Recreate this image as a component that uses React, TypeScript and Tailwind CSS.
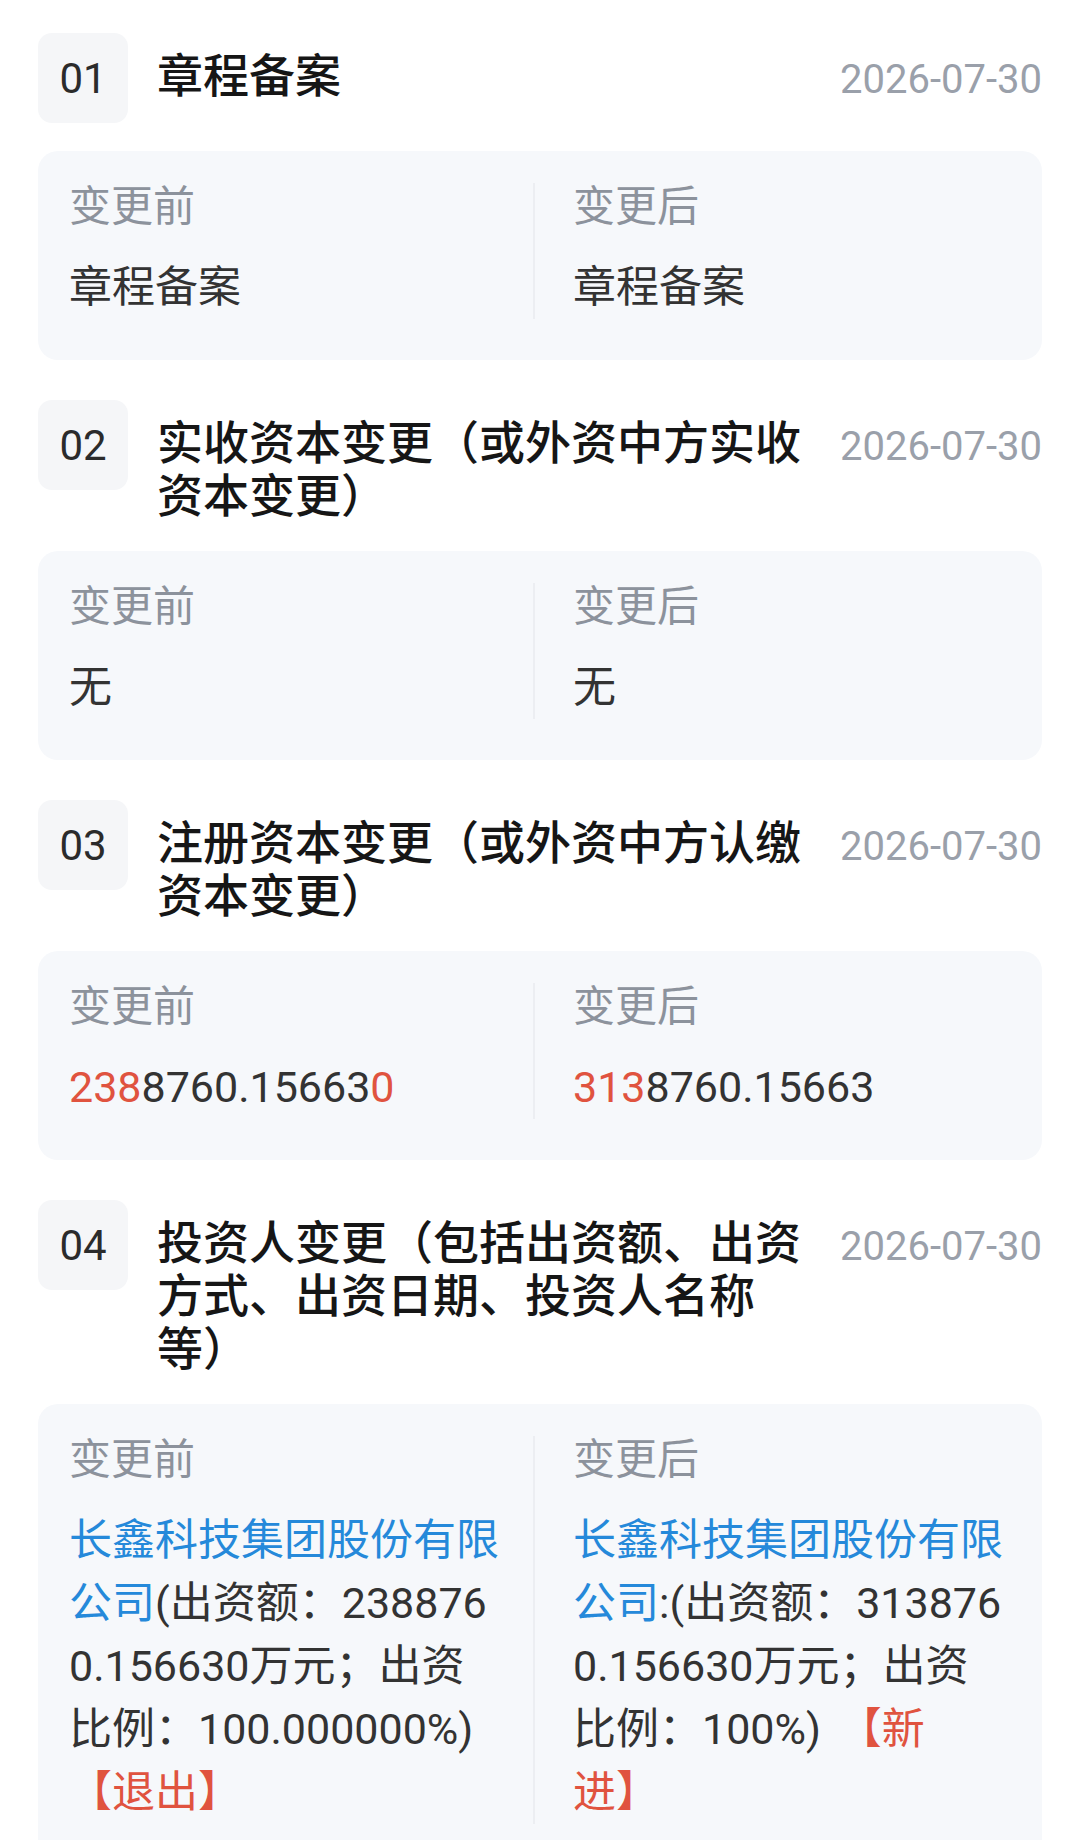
import type { ReactNode } from "react";

type ChangeItem = {
  no: string;
  title: string;
  date: string;
  before: ReactNode;
  after: ReactNode;
};

const red = "text-[#e0533f]";
const blue = "text-[#2589da]";

const items: ChangeItem[] = [
  {
    no: "01",
    title: "章程备案",
    date: "2026-07-30",
    before: "章程备案",
    after: "章程备案",
  },
  {
    no: "02",
    title: "实收资本变更（或外资中方实收资本变更）",
    date: "2026-07-30",
    before: "无",
    after: "无",
  },
  {
    no: "03",
    title: "注册资本变更（或外资中方认缴资本变更）",
    date: "2026-07-30",
    before: (
      <>
        <span className={red}>238</span>8760.15663<span className={red}>0</span>
      </>
    ),
    after: (
      <>
        <span className={red}>313</span>8760.15663
      </>
    ),
  },
  {
    no: "04",
    title: "投资人变更（包括出资额、出资方式、出资日期、投资人名称等）",
    date: "2026-07-30",
    before: (
      <>
        <span className={blue}>长鑫科技集团股份有限公司</span>(出资额：2388760.156630万元；出资比例：100.000000%){" "}
        <span className={red}>【退出】</span>
      </>
    ),
    after: (
      <>
        <span className={blue}>长鑫科技集团股份有限公司</span>:(出资额：3138760.156630万元；出资比例：100%){"\u00a0"}
        <span className={red}>
          【新
          <wbr />
          进】
        </span>
      </>
    ),
  },
];

function ChangeBlock({ item }: { item: ChangeItem }) {
  return (
    <div className="mb-[40px]">
      <div className="flex items-start">
        <div className="flex h-[90px] w-[90px] shrink-0 items-center justify-center rounded-[14px] bg-[#f5f6f8] text-[42px] text-[#2b2b2b]">
          {item.no}
        </div>
        <div className="ml-[29px] mt-[17px] min-w-0 flex-1 text-[46px] font-medium leading-[53px] text-[#161616]">
          {item.title}
        </div>
        <div className="ml-[20px] mt-[21px] shrink-0 text-[40px] leading-[52px] text-[#9aa0aa]">
          {item.date}
        </div>
      </div>
      <div className="mt-[28px] grid grid-cols-[466px_1fr] rounded-[20px] bg-[#f6f8fb] px-[31px] pb-[41px] pt-[32px]">
        <div className="border-r-2 border-[#eceef2] pr-[30px]">
          <div className="text-[42px] leading-[48px] text-[#8c929c]">变更前</div>
          <div className="mt-[25px] break-all text-[43px] leading-[63px] text-[#333333] [word-spacing:7px]">
            {item.before}
          </div>
        </div>
        <div className="pl-[38px] pr-[3px]">
          <div className="text-[42px] leading-[48px] text-[#8c929c]">变更后</div>
          <div className="mt-[25px] break-all text-[43px] leading-[63px] text-[#333333] [word-spacing:7px]">
            {item.after}
          </div>
        </div>
      </div>
    </div>
  );
}

export default function App() {
  return (
    <div className="h-[1840px] overflow-hidden bg-white px-[38px] pt-[33px] font-['Roboto','Noto_Sans_CJK_SC',sans-serif]">
      {items.map((it) => (
        <ChangeBlock key={it.no} item={it} />
      ))}
    </div>
  );
}
